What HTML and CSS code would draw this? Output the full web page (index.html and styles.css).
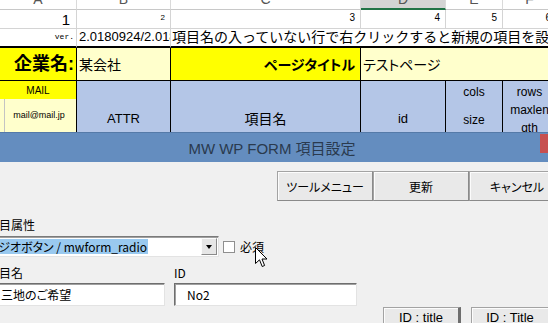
FILE: index.html
```html
<!DOCTYPE html>
<html lang="ja">
<head>
    <meta charset="UTF-8">
    <meta name="viewport" content="width=device-width, initial-scale=1.0">
    <title>MW WP FORM 項目設定</title>
    <link rel="stylesheet" href="styles.css">
</head>
<body>
    <div class="sheet">
        <div class="hd"><span>A</span></div>
        <div class="hd"><span>B</span></div>
        <div class="hd"><span>C</span></div>
        <div class="hd sel"><span>D</span></div>
        <div class="hd"><span>E</span></div>
        <div class="hd"><span>F</span></div>

        <div class="c big">1</div>
        <div class="c small">2</div>
        <div class="c num">3</div>
        <div class="c num">4</div>
        <div class="c num">5</div>
        <div class="c num">6</div>

        <div class="c ver">ver.</div>
        <div class="c vnum">2.0180924/2.018</div>
        <div class="c note">項目名の入っていない行で右クリックすると新規の項目を設定します</div>

        <div class="c yellow company">企業名:</div>
        <div class="c lite left">某会社</div>
        <div class="c yellow pagetitle">ページタイトル</div>
        <div class="c lite left wide">テストページ</div>

        <div class="c yellow mail-hd">MAIL</div>
        <div class="c lite mail">mail@mail.jp</div>
        <div class="c blue head col-b">ATTR</div>
        <div class="c blue head jp col-c">項目名</div>
        <div class="c blue head col-d">id</div>
        <div class="c blue cols"><span>cols</span><span>size</span></div>
        <div class="c blue rows"><span>rows</span><span>maxlen</span><span>gth</span></div>
    </div>

    <div class="dialog">
        <div class="titlebar">
            <span>MW WP FORM 項目設定</span>
            <span class="close"></span>
        </div>
        <div class="dbody">
            <div class="toolbar">
                <button class="btn">ツールメニュー</button>
                <button class="btn">更新</button>
                <button class="btn">キャンセル</button>
            </div>
            <div class="form">
                <div class="label">項目属性</div>
                <div class="combo-row">
                    <div class="combo">
                        <span class="picked">ラジオボタン / mwform_radio</span>
                        <span class="drop"></span>
                    </div>
                    <span class="check"></span>
                    <span class="check-label">必須</span>
                </div>
                <div class="fields">
                    <div class="field first">
                        <div class="label">項目名</div>
                        <div class="input">三地のご希望</div>
                    </div>
                    <div class="field second">
                        <div class="label id-label">ID</div>
                        <div class="input">No2</div>
                    </div>
                </div>
                <div class="id-buttons">
                    <button class="btn idbtn focus">ID : title</button>
                    <button class="btn idbtn">ID : Title</button>
                </div>
            </div>
        </div>
        <svg class="cursor" width="13" height="21" viewBox="0 0 13 21">
            <path d="M0.5 0.5 L0.5 16.5 L4.5 12.8 L7.2 19.5 L9.6 18.5 L7 12 L12 12 Z" fill="#fff" stroke="#000" stroke-width="1"/>
        </svg>
    </div>
</body>
</html>
```

FILE: styles.css
```css
body {
    margin: 0;
    width: 548px;
    height: 323px;
    overflow: hidden;
    background: #fff;
    font-family: "Liberation Sans", "Noto Sans CJK JP", sans-serif;
    color: #000;
}

/* spreadsheet behind the dialog */
.sheet {
    display: grid;
    grid-template-columns: 77px 94px 190px 85px 57px 54px;
    grid-template-rows: 10px 19px 19px 33px 18px 33px;
    width: 557px;
}
.hd {
    box-sizing: border-box;
    border-right: 1px solid #dadada;
    border-bottom: 1px solid #c8c8c8;
    font-size: 14px;
    line-height: 10px;
    color: #555;
    text-align: center;
    overflow: hidden;
}
.hd span {
    display: block;
    transform: translateY(-6px);
}
.hd.sel {
    background: #d4d4d4;
    border-bottom: 2px solid #217346;
}
.c {
    box-sizing: border-box;
    display: flex;
    align-items: flex-end;
    justify-content: flex-end;
    border-right: 1px solid #d4d4d4;
    border-bottom: 1px solid #d4d4d4;
    padding: 0 5px 1px;
    white-space: nowrap;
    overflow: hidden;
}
.big {
    font-size: 15px;
    line-height: 15px;
    padding-right: 6px;
}
.small {
    font-size: 8px;
    line-height: 8px;
    padding-bottom: 6px;
}
.num {
    font-size: 10px;
    line-height: 10px;
    padding-bottom: 5px;
}
.ver {
    font-family: "Liberation Mono", monospace;
    font-size: 8px;
    line-height: 8px;
    padding: 0 2px 5px 0;
    border-bottom: 2px solid #000;
}
.vnum {
    justify-content: flex-start;
    font-size: 13px;
    line-height: 15px;
    padding: 0 0 2px 2px;
    border-bottom: 2px solid #000;
}
.note {
    grid-column: 3 / 7;
    justify-content: flex-start;
    font-size: 14px;
    line-height: 16px;
    padding: 0 0 1px 1px;
    border-bottom: 2px solid #000;
    border-right: none;
}
.yellow { background: #ffff00; }
.lite { background: #ffffcc; }
.blue { background: #b4c6e7; }
.sheet .yellow, .sheet .lite, .sheet .blue {
    border-right-color: #000;
    border-bottom-color: #000;
}
.company {
    font-size: 18px;
    line-height: 20px;
    font-weight: bold;
    padding: 0 2px 6px 0;
}
.left {
    justify-content: flex-start;
    font-size: 14px;
    line-height: 16px;
    padding: 0 0 7px 2px;
}
.wide {
    grid-column: 4 / 7;
    font-feature-settings: "palt";
}
.pagetitle {
    font-size: 14px;
    line-height: 16px;
    font-weight: bold;
    padding: 0 5px 7px 0;
    font-feature-settings: "palt";
}
.mail-hd {
    grid-column: 1;
    grid-row: 5;
    justify-content: center;
    align-items: center;
    font-size: 10px;
    padding: 0;
    border-bottom: none;
}
.sheet .mail {
    grid-column: 1;
    grid-row: 6;
    justify-content: center;
    align-items: center;
    font-size: 9px;
    padding: 0 0 2px 2px;
    border-bottom: none;
    box-shadow: inset 4px 0 0 #ffffcc, inset 5px 0 0 #c4c4c4;
}
.head {
    grid-row: 5 / 7;
    justify-content: center;
    font-size: 13px;
    line-height: 18px;
    padding: 0 0 4px;
    border-bottom: none;
}
.col-b { grid-column: 2; }
.col-c { grid-column: 3; }
.col-d { grid-column: 4; }
.head.jp { font-size: 14px; }
.cols, .rows {
    grid-row: 5 / 7;
    flex-direction: column;
    align-items: center;
    justify-content: flex-start;
    font-size: 12px;
    line-height: 18px;
    padding: 2px 0 0;
    border-bottom: none;
}
.cols { grid-column: 5; }
.rows { grid-column: 6; }
.cols span + span { margin-top: 10px; }

/* dialog window */
.dialog {
    position: relative;
    height: 191px;
    background: #f0f0f0;
    overflow: hidden;
    font-family: "Liberation Sans", "Noto Sans CJK JP", sans-serif;
}
.titlebar {
    position: relative;
    box-sizing: border-box;
    height: 30px;
    display: flex;
    align-items: center;
    justify-content: center;
    padding-right: 4px;
    background: #648dbf;
    border-top: 1px solid #557aa8;
    color: #2a3a4e;
    font-size: 15px;
}
.close {
    position: absolute;
    right: -12px;
    top: 1px;
    width: 20px;
    height: 19px;
    background: #c75050;
}
.dbody {
    font-family: "Noto Sans CJK JP", sans-serif;
    font-size: 12px;
    font-feature-settings: "palt";
}
.toolbar {
    display: flex;
    padding: 9px 0 0 277px;
}
.btn {
    box-sizing: border-box;
    flex: none;
    width: 96px;
    height: 30px;
    margin: 0;
    padding: 0;
    font-family: "Noto Sans CJK JP", sans-serif;
    font-size: 12px;
    font-feature-settings: "palt";
    color: #000;
    background: #e9e9e9;
    border: 1px solid #a3a3a3;
    border-right-color: #8a8a8a;
    border-bottom-color: #8a8a8a;
    box-shadow: inset 1px 1px 0 #fcfcfc;
}
.form {
    margin-left: -17px;
}
.label {
    line-height: 14px;
    padding-left: 4px;
}
.form > .label {
    margin-top: 17px;
}
.combo-row {
    display: flex;
    align-items: center;
    margin-top: 4px;
}
.combo {
    box-sizing: border-box;
    width: 236px;
    height: 21px;
    display: flex;
    align-items: center;
    padding: 0 1px 0 4px;
    background: #fff;
    border: 1px solid;
    border-color: #7a7a7a #e3e3e3 #e3e3e3 #7a7a7a;
    box-shadow: inset 1px 1px 0 #a0a0a0;
}
.picked {
    background: #99c9ef;
    line-height: 15px;
    padding-right: 1px;
}
.drop {
    box-sizing: border-box;
    position: relative;
    margin-left: auto;
    width: 16px;
    height: 17px;
    background: #e6e6e6;
    border: 1px solid;
    border-color: #fcfcfc #8a8a8a #8a8a8a #fcfcfc;
}
.drop::after {
    content: "";
    position: absolute;
    left: 4px;
    top: 6px;
    border-left: 3px solid transparent;
    border-right: 3px solid transparent;
    border-top: 4px solid #000;
}
.check {
    box-sizing: border-box;
    width: 12px;
    height: 12px;
    margin-left: 4px;
    background: #fff;
    border: 1px solid #8f8f8f;
}
.check-label {
    margin-left: 5px;
    line-height: 14px;
}
.fields {
    display: flex;
    margin-top: 9px;
}
.field .input {
    box-sizing: border-box;
    height: 23px;
    margin-top: 3px;
    padding: 3px 0 0 5px;
    line-height: 15px;
    background: #fff;
    border: 1px solid;
    border-color: #6e6e6e #e3e3e3 #e3e3e3 #6e6e6e;
    box-shadow: inset 1px 1px 0 #a0a0a0;
}
.field.first { width: 182px; }
.field.first .input { padding-left: 17px; }
.field.second {
    width: 183px;
    margin-left: 9px;
}
.field.second .input { padding-left: 12px; }
.id-label { padding-left: 0; }
.id-buttons {
    display: flex;
    margin: 1px 0 0 400px;
}
.idbtn {
    width: 78px;
    height: 26px;
    font-family: "Liberation Sans", sans-serif;
    font-size: 13px;
    padding-bottom: 6px;
}
.idbtn.focus {
    border-right: 3px solid #6e6e6e;
    margin-right: 10px;
}
.cursor {
    position: absolute;
    left: 255px;
    top: 115px;
}
```
